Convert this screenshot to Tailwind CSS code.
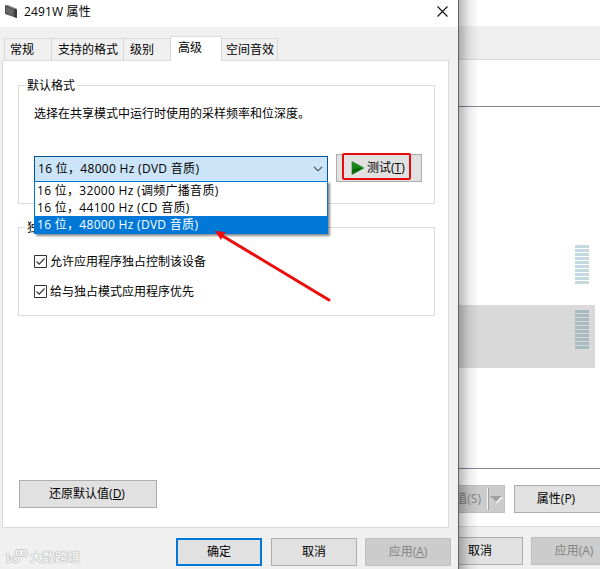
<!DOCTYPE html>
<html lang="zh-CN">
<head>
<meta charset="utf-8">
<title>2491W 属性</title>
<script src="https://cdn.jsdelivr.net/npm/@tailwindcss/browser@4"></script>
</head>
<body class="relative w-[600px] h-[569px] overflow-hidden bg-white text-black text-[12px] leading-[16px] whitespace-nowrap font-['Open_Sans','Noto_Sans_CJK_SC',sans-serif]">

<!-- sound window behind -->
<section class="absolute left-[458px] top-0 w-[142px] h-[569px] overflow-hidden flex flex-col bg-white">
  <div class="h-[26px] shrink-0"></div>
  <div class="h-[34px] shrink-0 bg-[#efefef] border-b border-[#d9d9d9]"></div>
  <div class="mt-[46px] h-[363px] shrink-0 border-y border-[#828790] flex flex-col">
    <div class="h-[198px] shrink-0 pt-[138px] pr-[11px] flex justify-end">
      <svg width="14" height="39"><path d="M7 0V39" stroke="#c3dbe0" stroke-width="14" stroke-dasharray="3 1"/></svg>
    </div>
    <div class="h-[63px] shrink-0 mr-[5px] pt-[5px] pr-[6px] flex justify-end bg-[#d9d9d9]">
      <svg width="14" height="39"><path d="M7 0V39" stroke="#a6bac0" stroke-width="14" stroke-dasharray="3 1"/></svg>
    </div>
  </div>
  <div class="h-[57px] shrink-0 pt-[16px] flex gap-[9px]">
    <div class="w-[47px] h-[28px] shrink-0 flex items-center bg-[#cccccc] border border-l-0 border-[#bfbfbf] text-[#838383] overflow-hidden">
      <div class="w-[30px] h-[22px] shrink-0 flex items-center justify-end pr-[6px] border-r border-[#f5f5f5] shadow-[1px_0_0_#a0a0a0]">值(S)</div>
      <svg width="15" height="10" class="ml-px" viewBox="0 0 15 10"><path d="M2 3H14L8 9Z" fill="#fff"/><path d="M1 2H13L7 8Z" fill="#a0a0a0"/></svg>
    </div>
    <div class="w-[87px] h-[28px] shrink-0 flex items-center justify-center bg-[#e1e1e1] border border-[#adadad] pr-[3px]">属性(P)</div>
  </div>
  <div class="grow border-t border-[#d9d9d9] bg-[#f0f0f0] pt-[10px] flex gap-[8px]">
    <div class="w-[65px] h-[28px] shrink-0 flex items-center bg-[#e1e1e1] border border-[#adadad] pl-[9px]">取消</div>
    <div class="w-[86px] h-[28px] shrink-0 flex items-center justify-center bg-[#cccccc] border border-[#bfbfbf] text-[#838383]">应用(A)</div>
  </div>
</section>
<div class="absolute left-[459px] top-0 w-[20px] h-[569px] bg-linear-to-r from-black/28 via-black/8 to-black/0"></div>

<!-- properties dialog -->
<main class="absolute left-0 top-0 w-[459px] h-[569px] flex flex-col bg-[#f0f0f0] border-r border-[#646464]">
  <header class="h-[27px] shrink-0 flex items-center bg-white pl-[4px] pr-[10px]">
    <svg width="14" height="15" class="-mt-[4px]" viewBox="0 0 14 15"><path d="M1 1L10 4L13 5V14L10 13L1 10Z" fill="#4d4d4d"/><path d="M2 3L9.500 5.500V12L2 9Z" fill="#666"/><path d="M1 1L4 1L13 5V6L10 5Z" fill="#858585"/><path d="M10 5V13L13 14V6Z" fill="#3c3c3c"/></svg>
    <h1 class="ml-[6px] -mt-[3px] grow tracking-[.15px]">2491W 属性</h1>
    <svg width="11" height="11" class="-mt-[5px]" viewBox="0 0 11 11"><path d="M.5 .5L10.5 10.5M10.5 .5L.5 10.5" stroke="#111" stroke-width="1.1"/></svg>
  </header>

  <nav class="h-[33px] shrink-0 pl-[4px] flex items-end">
    <div class="w-[48px] h-[22px] border border-b-0 border-[#d9d9d9] pl-[5px] pt-[3px]">常规</div>
    <div class="w-[72px] h-[22px] border-t border-r border-[#d9d9d9] pl-[6px] pt-[3px]">支持的格式</div>
    <div class="w-[46px] h-[22px] border-t border-[#d9d9d9] pl-[6px] pt-[3px]">级别</div>
    <div class="relative z-10 w-[52px] h-[25px] -mb-px bg-white border border-b-0 border-[#d9d9d9] pl-[7px] pt-[3px]">高级</div>
    <div class="w-[56px] h-[22px] border-t border-r border-[#d9d9d9] pl-[4px] pt-[3px]">空间音效</div>
  </nav>

  <div class="ml-[2px] w-[447px] h-[468px] shrink-0 bg-white border border-[#d9d9d9] px-[15px] pt-[24px] flex flex-col">
    <section class="w-[417px] h-[119px] shrink-0 border border-[#dcdcdc] flex flex-col">
      <h2 class="-mt-[8px] ml-[6px] px-[2px] bg-white self-start">默认格式</h2>
      <p class="ml-[15px] mt-[12px]">选择在共享模式中运行时使用的采样频率和位深度。</p>
      <div class="mt-[32px] ml-[15px] flex gap-[8px]">
        <div class="relative mt-[2px] w-[294px] h-[26px] flex items-center justify-between bg-[#cce4f7] border border-[#005499] pl-[3px] pr-[4px]">
          <span class="tracking-[.3px]">16 位，48000 Hz (DVD 音质)</span>
          <svg width="10" height="6" viewBox="0 0 10 6"><path d="M1 .8L5 4.8L9 .8" fill="none" stroke="#444" stroke-width="1.1"/></svg>
          <ul class="absolute z-20 -left-px top-[24px] w-[294px] h-[53px] bg-white border border-[#0078d7] leading-[17px] tracking-[.3px] shadow-[2px_2px_2px_rgba(0,0,0,0.45)]">
            <li class="h-[17px] pl-[2px]">16 位，32000 Hz (调频广播音质)</li>
            <li class="h-[17px] pl-[2px]">16 位，44100 Hz (CD 音质)</li>
            <li class="h-[17px] pl-[2px] bg-[#0078d7] text-white">16 位，48000 Hz (DVD 音质)</li>
          </ul>
        </div>
        <button class="w-[86px] h-[28px] flex items-center justify-start bg-[#e1e1e1] border border-[#adadad] pl-[14px]">
          <svg width="14" height="14" viewBox="0 0 14 14"><path d="M1 .5L13 7L1 13.5Z" fill="#168516" stroke="#3d8a3d" stroke-width=".8"/><path d="M1.5 8L12 7L1.5 13Z" fill="#066506"/></svg>
          <span class="ml-[2px]">测试(<u>T</u>)</span>
        </button>
      </div>
    </section>

    <section class="mt-[23px] w-[417px] h-[89px] shrink-0 border border-[#dcdcdc] flex flex-col">
      <h2 class="-mt-[8px] ml-[6px] px-[2px] bg-white self-start">独</h2>
      <label class="mt-[18px] ml-[15px] h-[16px] flex items-center gap-[3px]">
        <svg width="13" height="13" class="-mt-px" viewBox="0 0 13 13"><path d="M.5 .5H12.5V12.5H.5Z" fill="#fff" stroke="#333"/><path d="M2.5 6.5L5.2 9.2L10.5 3.5" fill="none" stroke="#333" stroke-width="1.2"/></svg>
        允许应用程序独占控制该设备
      </label>
      <label class="mt-[14px] ml-[15px] h-[16px] flex items-center gap-[3px]">
        <svg width="13" height="13" class="-mt-px" viewBox="0 0 13 13"><path d="M.5 .5H12.5V12.5H.5Z" fill="#fff" stroke="#333"/><path d="M2.5 6.5L5.2 9.2L10.5 3.5" fill="none" stroke="#333" stroke-width="1.2"/></svg>
        给与独占模式应用程序优先
      </label>
    </section>

    <button class="mt-[164px] ml-px w-[138px] h-[28px] shrink-0 bg-[#e1e1e1] border border-[#adadad] pr-[2px]">还原默认值(<u>D</u>)</button>
  </div>

  <footer class="pt-[10px] pl-[6px] flex items-start">
    <div class="w-[170px] h-[30px] pt-[7px] flex items-center gap-[2px]">
      <svg width="22" height="17" viewBox="0 0 22 17" fill="none" stroke-linejoin="round"><g stroke="#bdbdbd" stroke-width="3"><path d="M2 5V14H4M5 8C5 16 13 15 13 10M7 10L9 8"/><circle cx="12.5" cy="5" r="2.4"/><circle cx="18" cy="5" r="2.4"/></g><g stroke="#f7f7f7" stroke-width="1.5"><path d="M2 5V14H4M5 8C5 16 13 15 13 10M7 10L9 8"/><circle cx="12.5" cy="5" r="2.4"/><circle cx="18" cy="5" r="2.4"/></g></svg>
      <span class="mt-[2px] text-[12.5px] font-bold text-[#f5f5f5] [text-shadow:0_0_1px_#999,0_0_1px_#aaa]">大数跨境</span>
    </div>
    <button class="w-[86px] h-[28px] bg-[#e1e1e1] border-2 border-[#0078d7]">确定</button>
    <button class="ml-[9px] w-[86px] h-[28px] bg-[#e1e1e1] border border-[#adadad]">取消</button>
    <button class="ml-[8px] w-[86px] h-[28px] bg-[#cccccc] border border-[#bfbfbf] text-[#838383]">应用(<u>A</u>)</button>
  </footer>
</main>

<!-- annotations -->
<svg class="absolute z-30 left-0 top-0 pointer-events-none" width="600" height="569" viewBox="0 0 600 569">
  <rect x="343" y="154" width="67" height="25" rx="1" fill="none" stroke="#e60c0c" stroke-width="2"/>
  <path d="M329 300L221 235" stroke="#ed0b0b" stroke-width="3" stroke-linecap="round"/>
  <path d="M215 231L225.500 232L223 236L221 240Z" fill="#ed0b0b"/>
</svg>
</body>
</html>
